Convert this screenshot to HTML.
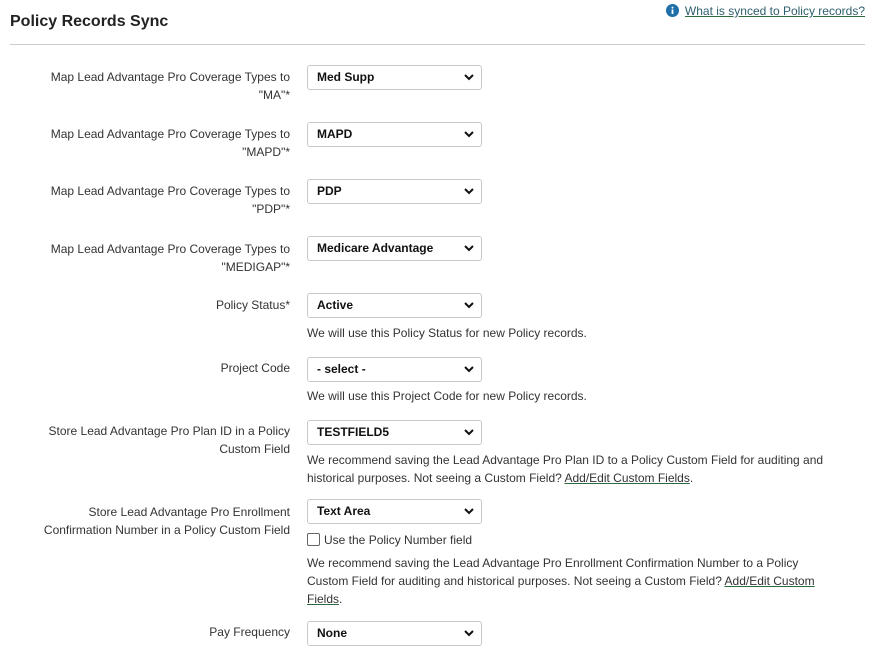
<!DOCTYPE html>
<html><head><meta charset="utf-8"><style>
html,body{margin:0;padding:0;background:#fff;width:876px;height:663px;overflow:hidden;font-family:"Liberation Sans",sans-serif;color:#333;}
.abs{position:absolute;}
.title{left:10px;top:13px;font-size:16px;font-weight:bold;color:#222;}
.rule{left:10px;top:44px;width:855px;height:1px;background:#ccc;}
.lbl{right:586px;text-align:right;font-size:12px;line-height:18px;white-space:nowrap;}
.sel{left:307px;width:173px;height:23px;border:1px solid #c8c8c8;border-radius:3px;background:#fff;font-size:12px;font-weight:bold;color:#111;line-height:23px;}
.sel span{position:absolute;left:9px;top:0;}
.sel svg{position:absolute;right:7px;top:8px;}
.help{left:307px;font-size:12px;line-height:18px;white-space:nowrap;}
a{color:#333;text-decoration:underline;text-decoration-color:#2d6a3f;}
.top{right:11px;top:4px;font-size:12px;}
</style></head><body>
<div class="abs top"><svg width="13" height="13" style="vertical-align:-2px;margin-right:6px"><circle cx="6.5" cy="6.5" r="6.5" fill="#1f6fa8"/><rect x="5.6" y="5.5" width="1.8" height="4.5" fill="#fff"/><circle cx="6.5" cy="3.6" r="1" fill="#fff"/></svg><a style="color:#2e5f6e">What is synced to Policy records?</a></div>
<div class="abs title">Policy Records Sync</div>
<div class="abs rule"></div>

<div class="abs lbl" style="top:68px">Map Lead Advantage Pro Coverage Types to<br>"MA"*</div>
<div class="abs sel" style="top:65px"><span>Med Supp</span><svg width="10" height="7"><path d="M1 1l4 4 4-4" stroke="#111" stroke-width="2" fill="none"/></svg></div>

<div class="abs lbl" style="top:125px">Map Lead Advantage Pro Coverage Types to<br>"MAPD"*</div>
<div class="abs sel" style="top:122px"><span>MAPD</span><svg width="10" height="7"><path d="M1 1l4 4 4-4" stroke="#111" stroke-width="2" fill="none"/></svg></div>

<div class="abs lbl" style="top:182px">Map Lead Advantage Pro Coverage Types to<br>"PDP"*</div>
<div class="abs sel" style="top:179px"><span>PDP</span><svg width="10" height="7"><path d="M1 1l4 4 4-4" stroke="#111" stroke-width="2" fill="none"/></svg></div>

<div class="abs lbl" style="top:240px">Map Lead Advantage Pro Coverage Types to<br>"MEDIGAP"*</div>
<div class="abs sel" style="top:236px"><span>Medicare Advantage</span><svg width="10" height="7"><path d="M1 1l4 4 4-4" stroke="#111" stroke-width="2" fill="none"/></svg></div>

<div class="abs lbl" style="top:296px">Policy Status*</div>
<div class="abs sel" style="top:293px"><span>Active</span><svg width="10" height="7"><path d="M1 1l4 4 4-4" stroke="#111" stroke-width="2" fill="none"/></svg></div>
<div class="abs help" style="top:324px">We will use this Policy Status for new Policy records.</div>

<div class="abs lbl" style="top:359px">Project Code</div>
<div class="abs sel" style="top:357px"><span>- select -</span><svg width="10" height="7"><path d="M1 1l4 4 4-4" stroke="#111" stroke-width="2" fill="none"/></svg></div>
<div class="abs help" style="top:387px">We will use this Project Code for new Policy records.</div>

<div class="abs lbl" style="top:422px">Store Lead Advantage Pro Plan ID in a Policy<br>Custom Field</div>
<div class="abs sel" style="top:420px"><span>TESTFIELD5</span><svg width="10" height="7"><path d="M1 1l4 4 4-4" stroke="#111" stroke-width="2" fill="none"/></svg></div>
<div class="abs help" style="top:451px">We recommend saving the Lead Advantage Pro Plan ID to a Policy Custom Field for auditing and<br>historical purposes. Not seeing a Custom Field? <a>Add/Edit Custom Fields</a>.</div>

<div class="abs lbl" style="top:503px">Store Lead Advantage Pro Enrollment<br>Confirmation Number in a Policy Custom Field</div>
<div class="abs sel" style="top:499px"><span>Text Area</span><svg width="10" height="7"><path d="M1 1l4 4 4-4" stroke="#111" stroke-width="2" fill="none"/></svg></div>
<div class="abs help" style="top:531px"><span style="display:inline-block;width:11px;height:11px;border:1px solid #666;border-radius:2px;vertical-align:-2px;margin-right:4px"></span>Use the Policy Number field</div>
<div class="abs help" style="top:554px">We recommend saving the Lead Advantage Pro Enrollment Confirmation Number to a Policy<br>Custom Field for auditing and historical purposes. Not seeing a Custom Field? <a>Add/Edit Custom</a><br><a>Fields</a>.</div>

<div class="abs lbl" style="top:623px">Pay Frequency</div>
<div class="abs sel" style="top:621px"><span>None</span><svg width="10" height="7"><path d="M1 1l4 4 4-4" stroke="#111" stroke-width="2" fill="none"/></svg></div>
</body></html>
